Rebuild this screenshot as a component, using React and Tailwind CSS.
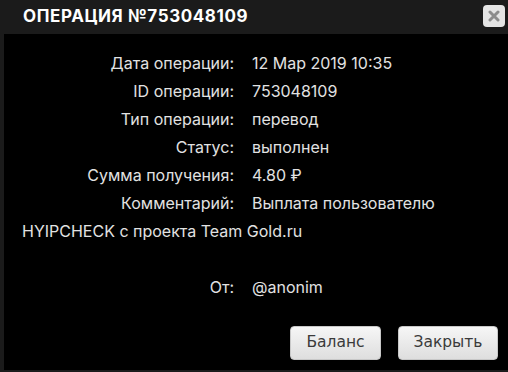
import React from "react";

const rows = [
  ["Дата операции:", "12 Мар 2019 10:35"],
  ["ID операции:", "753048109"],
  ["Тип операции:", "перевод"],
  ["Статус:", "выполнен"],
  ["Сумма получения:", "4.80 ₽"],
  ["Комментарий:", "Выплата пользователю"],
];

function Row({ label, value }) {
  return (
    <div className="flex">
      <span className="w-[212px] text-right">{label}</span>
      <span className="ml-[18px]">{value}</span>
    </div>
  );
}

export default function App() {
  return (
    <div className="w-[508px] h-[372px] bg-[#1b1b1b] flex flex-col overflow-hidden" style={{ fontFamily: "Inter, 'Noto Sans', sans-serif" }}>
      <div className="h-[34px] flex items-center justify-between pl-[23px] pr-[3px] shrink-0">
        <div className="text-white font-bold text-[17px] tracking-[0.6px]">ОПЕРАЦИЯ №753048109</div>
        <div className="w-[22px] h-[22px] mb-[2px] rounded-[4px] bg-[#e4e4e4] flex items-center justify-center">
          <svg width="12" height="12" viewBox="0 0 12 12">
            <path d="M2 2 L10 10 M10 2 L2 10" stroke="#8c8c8c" strokeWidth="3" strokeLinecap="round" />
          </svg>
        </div>
      </div>
      <div className="ml-[4px] mb-[2px] flex-1 bg-black flex flex-col">
        <div className="pt-[15px] pl-[18px] pr-[10px] text-[16px] leading-[28px] text-[#e2e2e2]">
          {rows.map(([l, v]) => (
            <Row key={l} label={l} value={v} />
          ))}
          <div>HYIPCHECK с проекта Team Gold.ru</div>
          <div className="h-[28px]"></div>
          <Row label="От:" value="@anonim" />
        </div>
        <div className="mt-auto mb-[10px] flex justify-end gap-[17px] pr-[10px]">
          <button className="w-[91px] h-[34px] rounded-[4px] border border-[#c8c8c8] bg-gradient-to-b from-[#f6f6f6] to-[#dedede] text-[#3a3a3a] text-[15.5px]" style={{ fontFamily: "'DejaVu Sans', Verdana, sans-serif" }}>Баланс</button>
          <button className="w-[100px] h-[34px] rounded-[4px] border border-[#c8c8c8] bg-gradient-to-b from-[#f6f6f6] to-[#dedede] text-[#3a3a3a] text-[15.5px]" style={{ fontFamily: "'DejaVu Sans', Verdana, sans-serif" }}>Закрыть</button>
        </div>
      </div>
    </div>
  );
}
